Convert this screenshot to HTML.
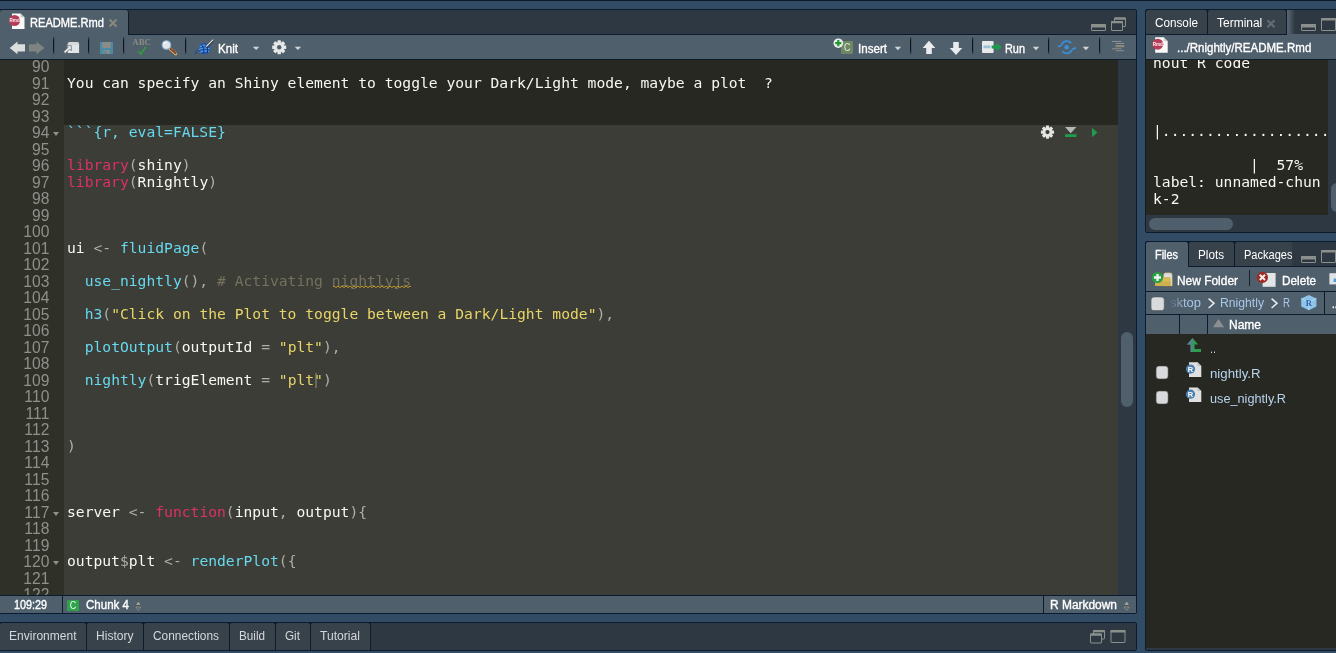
<!DOCTYPE html>
<html><head><meta charset="utf-8"><title>RStudio</title>
<style>
html,body{margin:0;padding:0}
body{width:1336px;height:653px;overflow:hidden;-webkit-font-smoothing:antialiased;background:#334c65;position:relative;font-family:"Liberation Sans",sans-serif;font-size:12px}
.abs,.lb,.bx{position:absolute}
.bx{box-sizing:border-box}
.lb{white-space:pre;line-height:16px;height:16px;transform-origin:0 50%;-webkit-text-stroke:0.35px currentColor}
.mono{will-change:transform;font-family:"DejaVu Sans Mono","Liberation Mono",monospace;font-size:14.67px;line-height:16.5px;white-space:pre}
.ln{height:16.5px;text-align:right;color:#8f908a}
.gn{font-family:"Liberation Sans",sans-serif;font-size:15.6px;letter-spacing:0.15px}
.cl{height:16.5px;color:#f8f8f2}
.cc{height:17px}
.t{color:#f8f8f2}.k{color:#dc3169}.f{color:#66d9ef}.s{color:#e8d568}.o{color:#adaea7}.c{color:#75715e}
.sq{}
.fold{position:absolute;left:53px;width:0;height:0;border-left:3px solid transparent;border-right:3px solid transparent;border-top:4px solid #8f908a}
.sep{position:absolute;width:1px;background:linear-gradient(rgba(13,23,34,.2),#0d1722 18%,#0d1722 82%,rgba(13,23,34,.2));top:37px;height:17px;box-shadow:.5px 0 0 rgba(13,23,34,.35)}
.tab{position:absolute;box-sizing:border-box;background:#38424b;border:1px solid #0c1b2e;border-bottom:none;border-radius:3px 3px 0 0}
.tab.sel{background:#505f6c}
</style></head><body>
<div class="abs" style="left:0;top:0;width:1336px;height:1px;background:#0a1a2c"></div>

<!-- SOURCE PANEL -->
<div class="bx" style="left:-1px;top:9px;width:1138px;height:605px;border:1px solid #0c1b2e;border-radius:2px;background:#2e3842;overflow:hidden"></div>
<div class="abs" style="left:0;top:10px;width:1136px;height:24px;background:#2e3842"></div>
<div class="abs" style="left:0;top:34px;width:1136px;height:1px;background:#0c1b2e"></div>
<div class="abs" style="left:0;top:10px;width:128px;height:25px;background:#505f6c;border-right:1px solid #0c1b2e;border-radius:3px 3px 0 0"></div>
<div class="abs" style="left:0;top:35px;width:1136px;height:24px;background:#505f6c"></div>
<div class="abs" style="left:0;top:59px;width:1136px;height:1px;background:#0c1b2e"></div>
<!-- editor -->
<div class="abs" style="left:0;top:60px;width:1118px;height:535px;background:#272822;overflow:hidden">
  <div class="abs" style="left:64px;top:65px;width:1054px;height:480px;background:#3c3d37"></div>
  <div class="abs" style="left:0;top:0;width:64px;height:535px;background:#2f3129"></div>
  <div class="abs mono gn" style="left:0;top:-1px;width:49.6px"><div class="ln">90</div><div class="ln">91</div><div class="ln">92</div><div class="ln">93</div><div class="ln">94</div><div class="ln">95</div><div class="ln">96</div><div class="ln">97</div><div class="ln">98</div><div class="ln">99</div><div class="ln">100</div><div class="ln">101</div><div class="ln">102</div><div class="ln">103</div><div class="ln">104</div><div class="ln">105</div><div class="ln">106</div><div class="ln">107</div><div class="ln">108</div><div class="ln">109</div><div class="ln">110</div><div class="ln">111</div><div class="ln">112</div><div class="ln">113</div><div class="ln">114</div><div class="ln">115</div><div class="ln">116</div><div class="ln">117</div><div class="ln">118</div><div class="ln">119</div><div class="ln">120</div><div class="ln">121</div><div class="ln">122</div><i class="fold" style="top:502.0px"></i><i class="fold" style="top:452.5px"></i><i class="fold" style="top:73.0px"></i></div>
  <div class="abs mono" style="left:66.5px;top:-1.6px"><div class="cl"></div><div class="cl"><span class="t">You can specify an Shiny element to toggle your Dark/Light mode, maybe a plot  ?</span></div><div class="cl"></div><div class="cl"></div><div class="cl"><span class="f">```{r, eval=FALSE}</span></div><div class="cl"></div><div class="cl"><span class="k">library</span><span class="o">(</span><span class="t">shiny</span><span class="o">)</span></div><div class="cl"><span class="k">library</span><span class="o">(</span><span class="t">Rnightly</span><span class="o">)</span></div><div class="cl"></div><div class="cl"></div><div class="cl"></div><div class="cl"><span class="t">ui </span><span class="o">&lt;- </span><span class="f">fluidPage</span><span class="o">(</span></div><div class="cl"></div><div class="cl">  <span class="f">use_nightly</span><span class="o">(), </span><span class="c"># Activating </span><span class="c sq">nightlyjs</span></div><div class="cl"></div><div class="cl">  <span class="f">h3</span><span class="o">(</span><span class="s">&quot;Click on the Plot to toggle between a Dark/Light mode&quot;</span><span class="o">),</span></div><div class="cl"></div><div class="cl">  <span class="f">plotOutput</span><span class="o">(</span><span class="t">outputId </span><span class="o">= </span><span class="s">&quot;plt&quot;</span><span class="o">),</span></div><div class="cl"></div><div class="cl">  <span class="f">nightly</span><span class="o">(</span><span class="t">trigElement </span><span class="o">= </span><span class="s">&quot;plt&quot;</span><span class="o">)</span></div><div class="cl"></div><div class="cl"></div><div class="cl"></div><div class="cl"><span class="o">)</span></div><div class="cl"></div><div class="cl"></div><div class="cl"></div><div class="cl"><span class="t">server </span><span class="o">&lt;- </span><span class="k">function</span><span class="o">(</span><span class="t">input</span><span class="o">, </span><span class="t">output</span><span class="o">){</span></div><div class="cl"></div><div class="cl"></div><div class="cl"><span class="t">output</span><span class="o">$</span><span class="t">plt </span><span class="o">&lt;- </span><span class="f">renderPlot</span><span class="o">({</span></div><div class="cl"></div><div class="cl"></div></div>
  <div class="abs" style="left:315px;top:313px;width:2px;height:15px;background:rgba(150,151,132,.5)"></div>
</div>
<!-- editor v scrollbar -->
<div class="abs" style="left:1118px;top:60px;width:18px;height:535px;background:#2e3842"></div>
<div class="abs" style="left:1121px;top:332px;width:12px;height:75px;border-radius:6px;background:#505f6c"></div>
<!-- status bar -->
<div class="abs" style="left:0;top:595px;width:1136px;height:1px;background:#0c1b2e"></div>
<div class="abs" style="left:0;top:596px;width:1136px;height:17px;background:#505f6c"></div>
<div class="abs" style="left:62px;top:596px;width:1px;height:17px;background:#0c1b2e"></div>
<div class="abs" style="left:1043px;top:596px;width:1px;height:17px;background:#0c1b2e"></div>

<!-- BOTTOM PANEL -->
<div class="bx" style="left:-1px;top:622px;width:1138px;height:29px;border:1px solid #0c1b2e;border-radius:2px;background:#2e3842"></div>
<div class="tab" style="left:-1px;top:622px;width:88px;height:28px"></div>
<div class="tab" style="left:86px;top:622px;width:58px;height:28px"></div>
<div class="tab" style="left:143px;top:622px;width:87px;height:28px"></div>
<div class="tab" style="left:229px;top:622px;width:47px;height:28px"></div>
<div class="tab" style="left:275px;top:622px;width:36px;height:28px"></div>
<div class="tab" style="left:310px;top:622px;width:61px;height:28px"></div>

<!-- CONSOLE PANEL -->
<div class="bx" style="left:1145px;top:9px;width:200px;height:224px;border:1px solid #0c1b2e;border-radius:2px;background:#2e3842"></div>
<div class="abs" style="left:1287px;top:10px;width:8px;height:24px;background:linear-gradient(90deg,#55636f 15%,#2e3842)"></div>
<div class="abs" style="left:1146px;top:34px;width:141px;height:1px;background:#0c1b2e"></div>
<div class="tab" style="left:1145px;top:9px;width:63px;height:25px"></div>
<div class="tab" style="left:1207px;top:9px;width:80px;height:25px"></div>
<div class="abs" style="left:1146px;top:35px;width:190px;height:24px;background:#505f6c"></div>
<div class="abs" style="left:1287px;top:34px;width:49px;height:1px;background:#505f6c"></div>
<div class="abs" style="left:1146px;top:59px;width:190px;height:1px;background:#0c1b2e"></div>
<div class="abs" style="left:1146px;top:60px;width:182px;height:155px;background:#272822"></div>
<div class="abs" style="left:1146px;top:60px;width:182px;height:155px;overflow:hidden">
 <div class="abs mono" style="left:6.5px;top:-6.5px;color:#f8f8f2;line-height:17px"><div class="cc">nout R code</div><div class="cc"></div><div class="cc"></div><div class="cc"></div><div class="cc">|.....................</div><div class="cc"></div><div class="cc">           |  57%</div><div class="cc">label: unnamed-chun</div><div class="cc">k-2</div></div>
</div>
<div class="abs" style="left:1328px;top:60px;width:8px;height:155px;background:#2e3842"></div>
<div class="abs" style="left:1331px;top:183px;width:12px;height:29px;border-radius:6px;background:#505f6c"></div>
<div class="abs" style="left:1146px;top:215px;width:190px;height:17px;background:#2e3842"></div>
<div class="abs" style="left:1149px;top:218px;width:84px;height:12px;border-radius:6px;background:#505f6c"></div>

<!-- FILES PANEL -->
<div class="bx" style="left:1145px;top:241px;width:200px;height:410px;border:1px solid #0c1b2e;border-radius:2px;background:#272822"></div>
<div class="abs" style="left:1146px;top:648px;width:190px;height:2px;background:#2e3842"></div>
<div class="abs" style="left:1146px;top:242px;width:190px;height:24px;background:#2e3842"></div>
<div class="abs" style="left:1146px;top:266px;width:190px;height:1px;background:#0c1b2e"></div>
<div class="tab sel" style="left:1145px;top:241px;width:44px;height:26px"></div>
<div class="tab" style="left:1188px;top:241px;width:47px;height:25px"></div>
<div class="tab" style="left:1234px;top:241px;width:58px;height:25px;border-right:none;border-radius:3px 0 0 0"></div>
<div class="abs" style="left:1146px;top:267px;width:190px;height:24px;background:#505f6c"></div>
<div class="abs" style="left:1146px;top:291px;width:190px;height:1px;background:#0c1b2e"></div>
<div class="abs" style="left:1146px;top:292px;width:190px;height:22px;background:#505f6c"></div>
<div class="abs" style="left:1146px;top:314px;width:190px;height:1px;background:#0c1b2e"></div>
<div class="abs" style="left:1146px;top:315px;width:190px;height:19px;background:#505f6c"></div>
<div class="abs" style="left:1179px;top:315px;width:1px;height:19px;background:#0c1b2e"></div>
<div class="abs" style="left:1207px;top:315px;width:1px;height:19px;background:#0c1b2e"></div>
<div class="abs" style="left:1324px;top:292px;width:1px;height:22px;background:#0c1b2e"></div>
<div class="abs" style="left:1249px;top:270px;width:1px;height:16px;background:#16222f"></div>

<!-- toolbar separators -->
<i class="sep" style="left:53px"></i><i class="sep" style="left:88px"></i><i class="sep" style="left:123px"></i><i class="sep" style="left:185px"></i>
<i class="sep" style="left:910px"></i><i class="sep" style="left:972px"></i><i class="sep" style="left:1048px"></i><i class="sep" style="left:1099px"></i>

<!-- ICONS -->
<svg class="abs" style="left:0;top:0" width="1336" height="653" viewBox="0 0 1336 653">
<defs>
 <g id="dd"><path d="M0 0h6.4l-3.2 3.4z" fill="#d4d6d6"/></g>
 <g id="rmd"><path d="M0 0h8.5l4 4v11.5h-12.5z" fill="#fbfbf8"/><path d="M8.5 0l4 4h-4z" fill="#c9cdd0"/><circle cx="2.6" cy="7" r="5.5" fill="#b83c58"/><text x="2.6" y="8.7" font-family="Liberation Sans" font-weight="bold" font-size="4.6" fill="#fbf3f4" text-anchor="middle">Rmd</text></g>
 <g id="min"><rect x=".5" y=".5" width="14" height="6" rx=".5" fill="none" stroke="#8c908d"/><rect x="0" y="0" width="15" height="3.4" rx=".8" fill="#8c908d"/></g>
 <g id="max"><rect x=".5" y=".5" width="14" height="12" rx=".5" fill="none" stroke="#8c908d"/><rect x="0" y="0" width="15" height="2.600" rx=".8" fill="#8c908d"/></g>
 <g id="res"><rect x="3.5" y="1" width="11" height="8.500" rx=".5" fill="none" stroke="#8c908d"/><rect x="3" y=".5" width="12" height="2.200" rx=".8" fill="#8c908d"/><rect x=".5" y="4.500" width="11" height="9" rx=".5" fill="#2e3842" stroke="#8c908d"/><rect x="0" y="4" width="12" height="2.200" rx=".8" fill="#8c908d"/></g>
 <g id="cbx"><rect x=".5" y=".5" width="12" height="12.8" rx="3" fill="#d9dadb" stroke="#4a4f52" stroke-opacity=".5"/></g>
 <g id="rfile"><path d="M0 0h8.6l3.7 3.7v11h-12.3z" fill="#dfe0e1"/><path d="M8.6 0l3.7 3.7h-3.7z" fill="#b9bcbf"/><circle cx="1.5" cy="6.8" r="4.6" fill="#4a7fae"/><text x="1.5" y="9.6" font-family="Liberation Sans" font-weight="bold" font-size="7.5" fill="#fff" text-anchor="middle">R</text></g>
 <g id="spin"><path d="M0 3.6l2.700-3.600 2.700 3.600z" fill="#a8aaa3"/><path d="M0 3.600h5.400" stroke="#3c3d38" stroke-width=".8"/><path d="M.3 5.200l2.400 3.300 2.400-3.300z" fill="#55564f" stroke="#9c9e97" stroke-width=".7"/></g>
</defs>
<!-- source tab -->
<use href="#rmd" x="12" y="13.5"/>
<path d="M109.5 19.5l7 7m0-7l-7 7" stroke="#8b8a7a" stroke-width="2" fill="none"/>
<!-- back / forward -->
<path d="M9.7 48l7.8-6.4v2.6h7.5v7.4h-7.5v2.6z" fill="#dcdddd"/>
<path d="M44.3 48l-7.8-6.4v2.6h-7.6v7.4h7.6v2.6z" fill="#808480"/>
<!-- popout -->
<path d="M67.7 53v-8.6q0-2.5 2.5-2.5h6.4q2.5 0 2.5 2.5v8.6z" fill="#e2e5e7"/>
<path d="M67.7 44.4q0-2.5 2.5-2.5h6.4q2.5 0 2.5 2.5v.6h-11.4z" fill="#d6d7d8"/>
<path d="M63.6 51.8l4.4-4.4-1.7-1.7h5v5l-1.7-1.7-4.4 4.4z" fill="#eceeee" stroke="#55626e" stroke-width=".7"/>
<!-- save -->
<path d="M100 42h13v12h-13z" fill="#4b8aa4"/><path d="M102.2 42h8.6v6h-8.6z" fill="#8a8c88"/><path d="M103.3 50h6.6v4h-6.6z" fill="#8a8c88"/><path d="M104.4 51h2v3h-2z" fill="#4b8aa4"/>
<!-- ABC check -->
<text x="132.3" y="45.2" font-family="Liberation Serif" font-weight="bold" font-size="7.7" fill="#8b8c83" textLength="18.6" lengthAdjust="spacingAndGlyphs">ABC</text>
<path d="M138.2 51.2l2.600 2.800 5.200-7.200" stroke="#2e9d3c" stroke-width="1.600" fill="none"/>
<!-- find -->
<path d="M169.600 48.400l6.200 5.500" stroke="#d8c27a" stroke-width="2.800" stroke-linecap="round"/>
<path d="M170.400 48.600l5.200 4.700" stroke="#8a3520" stroke-width="1.800" stroke-linecap="round"/>
<circle cx="166.4" cy="45" r="4.3" fill="#e3e6e9" stroke="#86b6dc" stroke-width="1.1"/>
<path d="M163.6 44.4a3 3 0 0 1 3-2.4" stroke="#fff" stroke-width="1.2" fill="none"/>
<!-- knit -->
<path d="M199.4 50.4q-2.6-.6-3.6.8t1.4 1.6q-2.6.4-2.6 1.6" stroke="#24479c" stroke-width="1" fill="none"/>
<circle cx="204.4" cy="48.6" r="5.7" fill="#2458b0"/>
<path d="M199.6 47q4-3 9.4-1.4M199 49.4q5-2.6 10.6-.6M200.4 52q4-2 8.6-.4" stroke="#53b0e2" stroke-width="1.1" fill="none"/>
<path d="M201.6 44.6q3 3.4 2.2 9M205.4 43.6q3.2 4 2 9.6" stroke="#17308a" stroke-width="1" fill="none"/>
<path d="M206.4 47l7-7" stroke="#1b2732" stroke-width="2.2"/>
<path d="M206.2 46.6l7-7" stroke="#e8e8e6" stroke-width="1.3"/>
<use href="#dd" x="252.9" y="46.7"/>
<!-- gear -->
<g transform="translate(279.2 47.3)" fill="#e7e8e8">
 <g id="teeth"><rect x="-1.7" y="-7" width="3.4" height="14" rx=".6"/><rect x="-1.7" y="-7" width="3.4" height="14" rx=".6" transform="rotate(45)"/><rect x="-1.7" y="-7" width="3.4" height="14" rx=".6" transform="rotate(90)"/><rect x="-1.7" y="-7" width="3.4" height="14" rx=".6" transform="rotate(135)"/></g>
 <circle r="5.1"/><circle r="2.2" fill="#505f6c"/>
</g>
<use href="#dd" x="294.7" y="46.7"/>
<!-- insert -->
<rect x="841" y="41" width="12" height="13" rx="1.2" fill="#6e8962"/>
<text transform="translate(847.2 51.3) scale(.88 1)" font-family="Liberation Sans" font-size="10" fill="#e6e8e4" text-anchor="middle">C</text>
<circle cx="838.3" cy="43.2" r="4.8" fill="#eef0ee"/>
<path d="M835.2 43.2h6.2m-3.1-3.1v6.2" stroke="#1e9b30" stroke-width="2.2"/>
<use href="#dd" x="894.7" y="46.8"/>
<!-- up / down -->
<path d="M929 40.7l6.3 7.4h-3.5v5.9h-5.6v-5.9h-3.5z" fill="#e8ecee"/>
<path d="M956 55l6.3-7h-3.5v-6h-5.6v6h-3.5z" fill="#e8ecee"/>
<!-- run -->
<rect x="982" y="41" width="11.6" height="12" rx="1" fill="#e7e9eb"/>
<rect x="983.4" y="45.4" width="7" height="2.8" fill="#9cc3dc"/>
<path d="M991.6 45.4h4.6v-2.6l5.6 4.2-5.6 4.2v-2.6h-4.6z" fill="#1f9b4e"/>
<use href="#dd" x="1032.8" y="46.8"/>
<!-- source / rerun blue icon -->
<g stroke="#3a8fd8" fill="none" stroke-width="1.8">
 <path d="M1061.6 44.6a5.6 5.6 0 0 1 9.6-1.4"/><path d="M1071.8 49.8a5.6 5.6 0 0 1-9.6 1.4"/>
 <path d="M1058 46.2q2 .6 3.600-1.200M1072 49.600q2-1.800 4-1.200"/>
</g>
<circle cx="1066.7" cy="47.2" r="2.3" fill="#3a8fd8"/>
<use href="#dd" x="1082.7" y="46.8"/>
<!-- outline -->
<g fill="#8b9092"><rect x="1112" y="41" width="9.4" height="1"/><rect x="1115.6" y="43" width="8.6" height="1"/><rect x="1115.6" y="45" width="8.6" height="2.2" fill="#8b887c"/><rect x="1112" y="48.2" width="9.4" height="1"/><rect x="1115.6" y="50.2" width="8.6" height="1"/></g>
<!-- pane controls -->
<use href="#min" x="1091" y="24"/><use href="#res" x="1111" y="17"/>
<use href="#min" x="1301" y="24"/><use href="#max" x="1321" y="18"/>
<use href="#min" x="1301" y="256"/><use href="#max" x="1321" y="250"/>
<use href="#res" x="1090" y="629.5"/><use href="#max" x="1110.5" y="630"/>
<!-- chunk toolbar -->
<g transform="translate(1047.5 132.1)" fill="#e4e5e2"><use href="#teeth" transform="scale(.94)"/><circle r="4.8"/><circle r="2.1" fill="#3c3d37"/></g>
<path d="M1065 127h11.4l-5.7 6.2z" fill="#b5b8b2"/><rect x="1065" y="134.2" width="11.4" height="2.8" fill="#1f9b4e"/>
<path d="M1092 127.8l5.4 4.7-5.4 4.7z" fill="#1f9b4e"/>
<path d="M333 286.8q1-1.500 2 0t2 0t2 0t2 0t2 0t2 0t2 0t2 0t2 0t2 0t2 0t2 0t2 0t2 0t2 0t2 0t2 0t2 0t2 0t2 0t2 0t2 0t2 0t2 0t2 0t2 0t2 0t2 0t2 0t2 0t2 0t2 0t2 0t2 0t2 0t2 0t2 0t2 0t2 0" stroke="#c29a2c" stroke-width="1" fill="none"/>
<!-- status bar -->
<rect x="67" y="600" width="12" height="11" rx="1" fill="#2da34a"/>
<text transform="translate(73 609.4) scale(.86 1)" font-family="Liberation Sans" font-size="10.5" fill="#eef4ee" text-anchor="middle">C</text>
<use href="#spin" x="135.6" y="601.8"/><use href="#spin" x="1124" y="601.8"/>
<!-- console path icon -->
<use href="#rmd" x="1155.2" y="37.2"/>
<path d="M1267.5 20.2l7 7m0-7l-7 7" stroke="#636c74" stroke-width="2.2" fill="none"/>
<!-- files toolbar -->
<path d="M1163.5 286v-11q0-2.2 2.2-2.2h4.4q2.2 0 2.2 2.2v11z" fill="#dcdddf" stroke="#b08c3a" stroke-width=".5"/>
<path d="M1155 277h14q1.6 0 1.6 1.600v7.4h-15.6z" fill="#d8b957"/><path d="M1155 281.600h15.6v4.400h-15.6z" fill="#cfae4e"/>
<circle cx="1157.500" cy="277.500" r="5.600" fill="#2a9f42"/><path d="M1154 277.500h7m-3.500-3.500v7" stroke="#eef2f6" stroke-width="2.300"/>
<rect x="1262.600" y="273" width="13" height="13.800" fill="#e3e5e7"/>
<circle cx="1262.400" cy="277.400" r="5.600" fill="#9c2a24"/><path d="M1259.800 274.800l5.200 5.200m0-5.200l-5.200 5.200" stroke="#f2eeee" stroke-width="2"/>
<rect x="1329.400" y="273.200" width="8" height="11.200" fill="#dfe2e4"/><rect x="1333.600" y="278.600" width="3" height="3.400" fill="#4a9ad4"/>
<!-- breadcrumb -->
<defs><linearGradient id="fd" x1="0" x2="1"><stop offset="0" stop-color="#505f6c"/><stop offset="1" stop-color="#505f6c" stop-opacity="0"/></linearGradient></defs>
<g transform="translate(1150.5 296.5) scale(1.1 1.06)"><use href="#cbx"/></g>
<path d="M1208.600 298.600l5.400 4.700-5.400 4.700M1271.600 298.600l5.400 4.700-5.400 4.700" stroke="#e6e8ea" stroke-width="1.600" fill="none"/>
<path d="M1308.800 295l7.600 3.600v8l-7.600 3.600-7.600-3.600v-8z" fill="#8ec4ea"/><path d="M1301.200 298.600l7.600 3.400 7.600-3.400M1308.800 302v8.200" stroke="#b9dcf4" stroke-width=".8" fill="none"/>
<text x="1308.800" y="305.600" font-family="Liberation Serif" font-weight="bold" font-size="8.500" fill="#2f66a8" text-anchor="middle">R</text>
<path d="M1213 327.300l5.500-8.300 5.500 8.300z" fill="#8b8f90"/>
<!-- file list -->
<path d="M1192.600 338l5.600 6.600h-3.600v4.400h6.400v3h-10.400v-7.400h-3.600z" fill="#2a9e4c"/><path d="M1192.600 338v14h-2v-7.400h-3.600z" fill="#5b8096"/>
<use href="#cbx" x="1155.6" y="365.6"/><use href="#cbx" x="1155.6" y="390.6"/>
<use href="#rfile" x="1189" y="362.300"/><use href="#rfile" x="1189" y="387.400"/>
</svg>

<span class="lb" style="left:30.0px;top:14.5px;color:#fff;font-size:12px;transform:scaleX(0.9248);">README.Rmd</span>
<span class="lb" style="left:218.0px;top:40.8px;color:#fff;font-size:12px;transform:scaleX(0.9668);">Knit</span>
<span class="lb" style="left:858.0px;top:40.5px;color:#fff;font-size:12px;transform:scaleX(0.9662);">Insert</span>
<span class="lb" style="left:1005.0px;top:40.8px;color:#fff;font-size:12px;transform:scaleX(0.9084);">Run</span>
<span class="lb" style="left:14.0px;top:596.5px;color:#fff;font-size:12px;transform:scaleX(0.8991);">109:29</span>
<span class="lb" style="left:86.0px;top:596.5px;color:#fff;font-size:12px;transform:scaleX(0.9619);">Chunk 4</span>
<span class="lb" style="left:1049.5px;top:596.5px;color:#fff;font-size:12px;transform:scaleX(0.9947);">R Markdown</span>
<span class="lb" style="left:9.0px;top:628.0px;color:#d3d8dc;font-size:12px;transform:scaleX(1.0019);-webkit-text-stroke:0">Environment</span>
<span class="lb" style="left:96.0px;top:628.0px;color:#d3d8dc;font-size:12px;transform:scaleX(1.0042);-webkit-text-stroke:0">History</span>
<span class="lb" style="left:153.0px;top:628.0px;color:#d3d8dc;font-size:12px;transform:scaleX(0.9892);-webkit-text-stroke:0">Connections</span>
<span class="lb" style="left:239.0px;top:628.0px;color:#d3d8dc;font-size:12px;transform:scaleX(0.9742);-webkit-text-stroke:0">Build</span>
<span class="lb" style="left:285.0px;top:628.0px;color:#d3d8dc;font-size:12px;transform:scaleX(0.9776);-webkit-text-stroke:0">Git</span>
<span class="lb" style="left:320.0px;top:628.0px;color:#d3d8dc;font-size:12px;transform:scaleX(1.0107);-webkit-text-stroke:0">Tutorial</span>
<span class="lb" style="left:1155.0px;top:15.4px;color:#fff;font-size:12px;transform:scaleX(0.9766);-webkit-text-stroke:0">Console</span>
<span class="lb" style="left:1217.0px;top:15.4px;color:#fff;font-size:12px;transform:scaleX(0.9987);-webkit-text-stroke:0">Terminal</span>
<span class="lb" style="left:1176.7px;top:39.5px;color:#fff;font-size:12px;transform:scaleX(0.9590);">.../Rnightly/README.Rmd</span>
<span class="lb" style="left:1155.3px;top:247.0px;color:#fff;font-size:12px;transform:scaleX(0.9075);">Files</span>
<span class="lb" style="left:1198.0px;top:247.3px;color:#fff;font-size:12px;transform:scaleX(0.9742);-webkit-text-stroke:0">Plots</span>
<span class="lb" style="left:1244.0px;top:247.3px;color:#fff;font-size:12px;transform:scaleX(0.9202);-webkit-text-stroke:0">Packages</span>
<span class="lb" style="left:1177.0px;top:273.0px;color:#fff;font-size:12px;transform:scaleX(0.9941);">New Folder</span>
<span class="lb" style="left:1282.0px;top:273.0px;color:#fff;font-size:12px;transform:scaleX(0.9802);">Delete</span>
<span class="lb" style="left:1170.0px;top:295.0px;color:#a9c8e6;font-size:12px;transform:scaleX(1.0806);-webkit-text-stroke:0">sktop</span>
<span class="lb" style="left:1220.0px;top:295.0px;color:#a9c8e6;font-size:12px;transform:scaleX(1.0148);-webkit-text-stroke:0">Rnightly</span>
<span class="lb" style="left:1283.0px;top:295.0px;color:#a9c8e6;font-size:12px;transform:scaleX(0.8072);-webkit-text-stroke:0">R</span>
<span class="lb" style="left:1229.0px;top:317.0px;color:#fff;font-size:12px;transform:scaleX(0.9995);">Name</span>
<span class="lb" style="left:1332.0px;top:296.0px;color:#fff;font-size:12px;transform:scaleX(0.7988);">...</span>
<span class="lb" style="left:1210.0px;top:340.5px;color:#b7d3ee;font-size:12px;transform:scaleX(0.8993);-webkit-text-stroke:0">..</span>
<span class="lb" style="left:1210.4px;top:365.7px;color:#b7d3ee;font-size:12px;transform:scaleX(1.1049);-webkit-text-stroke:0">nightly.R</span>
<span class="lb" style="left:1210.0px;top:390.7px;color:#b7d3ee;font-size:12px;transform:scaleX(1.0581);-webkit-text-stroke:0">use_nightly.R</span>
<div class="abs" style="left:1166px;top:294px;width:20px;height:18px;background:linear-gradient(90deg,#505f6c 15%,rgba(80,95,108,0))"></div>
</body></html>
